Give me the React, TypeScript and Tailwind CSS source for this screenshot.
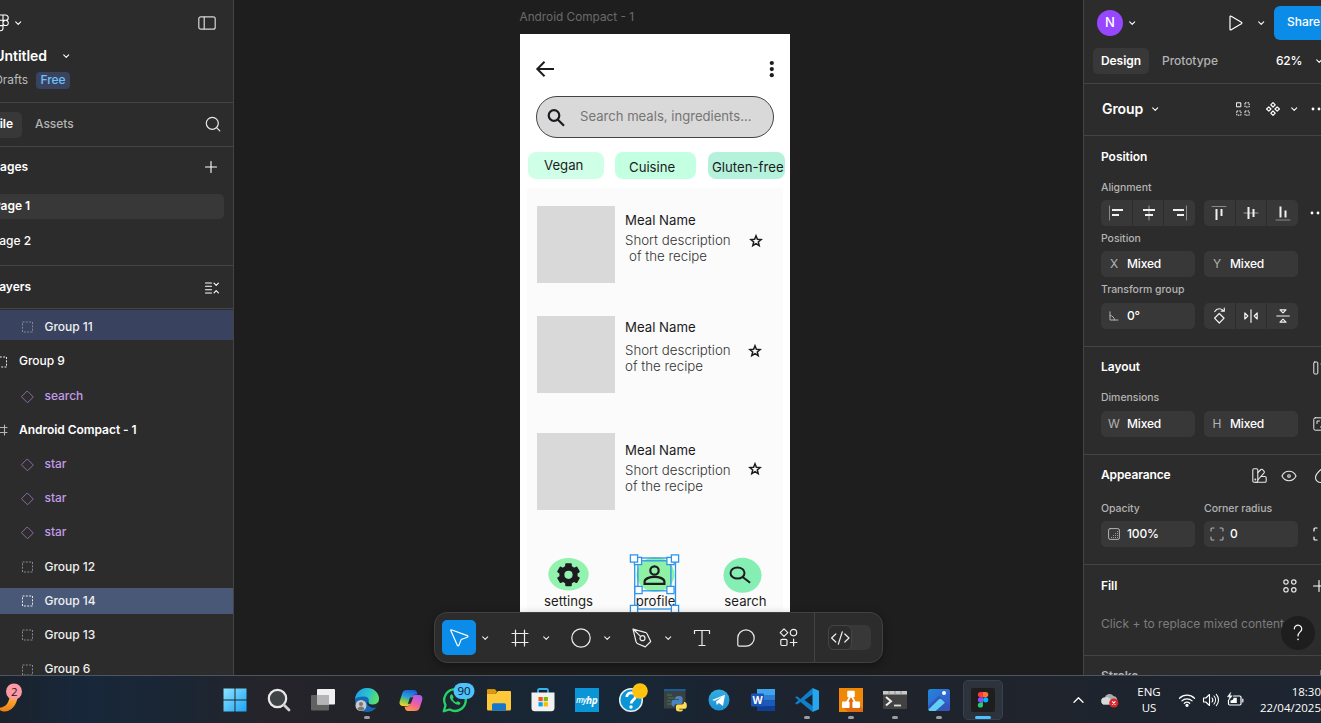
import React from "react";

type IconProps = {
  w: number;
  h: number;
  className?: string;
  sw?: number;
  children: React.ReactNode;
};

function Icon({ w, h, className = "", sw = 1, children }: IconProps) {
  return (
    <svg
      width={w}
      height={h}
      viewBox={`0 0 ${w} ${h}`}
      fill="none"
      stroke="currentColor"
      strokeWidth={sw}
      strokeLinecap="round"
      strokeLinejoin="round"
      className={`shrink-0 ${className}`}
    >
      {children}
    </svg>
  );
}

function Chevron({ className = "" }: { className?: string }) {
  return (
    <Icon w={8} h={6} sw={1.1} className={className}>
      <path d="M1.7 1.8 4.200 4.300 6.700 1.800" />
    </Icon>
  );
}

/* ---------- Left panel ---------- */

type Layer = { name: string; kind: "group" | "component" | "frame"; root?: boolean; state?: "hover" | "selected"; dim?: boolean };

const layers: Layer[] = [
  { name: "Group 11", kind: "group", state: "hover", dim: true },
  { name: "Group 9", kind: "group", root: true },
  { name: "search", kind: "component" },
  { name: "Android Compact - 1", kind: "frame", root: true },
  { name: "star", kind: "component" },
  { name: "star", kind: "component" },
  { name: "star", kind: "component" },
  { name: "Group 12", kind: "group", dim: true },
  { name: "Group 14", kind: "group", state: "selected" },
  { name: "Group 13", kind: "group", dim: true },
  { name: "Group 6", kind: "group", dim: true },
];

function LayerIcon({ layer }: { layer: Layer }) {
  if (layer.kind === "component")
    return (
      <Icon w={14} h={14} className="mt-[2px] text-[#8a6ca8]">
        <path d="M7.500 1.200 13.300 7 7.500 12.800 1.700 7z" />
      </Icon>
    );
  if (layer.kind === "frame")
    return (
      <Icon w={14} h={14} className="text-[#b5b5b5]" sw={1.1}>
        <path d="M4.500 2v10M10.500 2v10M2 4.500h11M2 9.500h11" />
      </Icon>
    );
  return (
    <Icon w={14} h={14} className={`mt-[1px] ${layer.dim ? "text-[#858891]" : "text-[#e8e8e8]"}`}>
      <rect x="2.500" y="2" width="10" height="10" strokeDasharray="2 1.33" strokeLinecap="butt" />
    </Icon>
  );
}

function LayerRow({ layer }: { layer: Layer }) {
  const bg =
    layer.state === "selected"
      ? "h-[26px] bg-[#4a5878]"
      : layer.state === "hover"
        ? "-mt-[4px] h-[30px] bg-[#394360] pt-[3px]"
        : "h-[26px]";
  const color = layer.kind === "component" ? "text-[#c29be8]" : layer.root ? "text-white" : "text-[#f0f0f0]";
  return (
    <div className="flex h-[34.2px] shrink-0 items-center">
      <div className={`flex w-full items-center ${bg}`}>
        <div className={layer.root ? "-ml-[6px] flex w-[25px]" : "ml-[20px] flex w-[24.500px]"}>
          <LayerIcon layer={layer} />
        </div>
        <span className={`whitespace-nowrap ${color} ${layer.kind === "frame" ? "font-semibold" : "font-medium"}`}>{layer.name}</span>
      </div>
    </div>
  );
}

function Clipped({ className, children }: { className: string; children: React.ReactNode }) {
  return <div className={`flex shrink-0 justify-end overflow-hidden whitespace-nowrap ${className}`}>{children}</div>;
}

function LeftPanel() {
  return (
    <aside className="flex h-full w-[234px] shrink-0 flex-col overflow-hidden border-r border-[#444444] bg-[#2c2c2c] text-[12px] font-medium tracking-[-0.040px] text-white">
      <div className="h-[103px] shrink-0 border-b border-[#444444]">
        <div className="flex h-[45px] items-center">
          <Icon w={12} h={18} className="-ml-[3px]" sw={1.1}>
            <path d="M6 1H3.5a2.6 2.6 0 0 0 0 5.3H6zM6 1h2.6a2.6 2.6 0 0 1 0 5.3H6zM6 6.300H3.500a2.600 2.600 0 0 0 0 5.300H6zM6 8.900a2.600 2.600 0 1 0 5.300 0 2.600 2.600 0 1 0-5.300 0M6 11.600H3.500A2.600 2.600 0 1 0 6 14.300z" />
          </Icon>
          <Chevron className="ml-[5px]" />
          <Icon w={18} h={14} className="ml-[176px] text-[#d8d8d8]" sw={1.2}>
            <rect x="0.800" y="0.800" width="16.400" height="12.400" rx="2" />
            <path d="M6.200 1v12" />
          </Icon>
        </div>
        <div className="flex h-[22px] items-center">
          <Clipped className="mb-[1px] w-[47px] text-[14px] font-semibold">Untitled</Clipped>
          <Chevron className="ml-[15px]" />
        </div>
        <div className="flex h-[26px] items-center">
          <Clipped className="w-[28px] font-normal text-[#b9b9b9]">Drafts</Clipped>
          <span className="ml-[8px] flex h-[17px] w-[34px] items-center justify-center rounded-[4px] bg-[#394360] text-[#6fc0fb]">Free</span>
        </div>
      </div>

      <div className="flex h-[44px] shrink-0 items-center border-b border-[#444444]">
        <Clipped className="h-[26px] w-[22px] items-center rounded-r-[5px] bg-[#383838] pr-[9px] pb-[1px] font-semibold">File</Clipped>
        <span className="mb-[1px] ml-[13px] w-[38px] text-[#b3b3b3]">Assets</span>
        <Icon w={16} h={16} className="mb-[1px] ml-[131.500px] text-[#e8e8e8]" sw={1.2}>
          <circle cx="7.300" cy="7.300" r="6" />
          <path d="m11.800 11.800 3 3" />
        </Icon>
      </div>

      <div className="h-[119px] shrink-0 border-b border-[#444444]">
        <div className="flex h-[40px] items-center">
          <Clipped className="w-[28px] font-semibold">Pages</Clipped>
          <Icon w={12} h={12} className="ml-[177px]" sw={1.1}>
            <path d="M6 .5v11M.5 6h11" />
          </Icon>
        </div>
        <div className="mt-[7px] flex h-[25px] w-[224px] items-center rounded-r-[5px] bg-[#383838] pb-[2px]">
          <Clipped className="w-[30px] font-semibold">Page 1</Clipped>
        </div>
        <div className="mt-[9px] flex h-[25px] items-center">
          <Clipped className="w-[31px]">Page 2</Clipped>
        </div>
      </div>

      <div className="flex h-[43px] shrink-0 items-center border-b border-[#444444]">
        <Clipped className="w-[31px] font-semibold">Layers</Clipped>
        <Icon w={14} h={12} className="mt-[2px] ml-[174px]" sw={1.1}>
          <path d="M.5 1h6M.5 4.300h6M.5 7.700h6M.5 11h6" />
          <path d="m9 1.200 2.200 2.200 2.200-2.200M9 10.800l2.200-2.200 2.200 2.200" />
        </Icon>
      </div>
      <div className="mt-[1.200px] flex flex-col">
        {layers.map((l, i) => (
          <LayerRow key={i} layer={l} />
        ))}
      </div>
    </aside>
  );
}

/* ---------- Canvas ---------- */

const meals = [
  { gap: "mt-[18px]", name: "pt-[6px]", desc: "mt-[4px]", star: "mt-[28px] ml-[17.500px]", indent: true },
  { gap: "mt-[33px]", name: "pt-[3.500px]", desc: "mt-[6.500px]", star: "mt-[28px] ml-[17px]", indent: false },
  { gap: "mt-[40px]", name: "pt-[9px]", desc: "mt-[4px]", star: "mt-[29.500px] ml-[16.500px]", indent: false },
];

function Meal({ gap, name, desc, star, indent }: (typeof meals)[number]) {
  return (
    <div className={`ml-[10px] flex h-[77px] ${gap}`}>
      <div className="w-[78px] shrink-0 bg-[#d9d9d9]" />
      <div className={`ml-[10.500px] w-[106px] shrink-0 whitespace-nowrap text-[13.200px] leading-[16px] ${name}`}>
        <div className="text-[#1a1a1a]">Meal Name</div>
        <div className={`text-[13.300px] font-light text-[#333333] ${desc}`}>
          Short description
          <br />
          <span className={indent ? "ml-[4px]" : ""}>of the recipe</span>
        </div>
      </div>
      <Icon w={14} h={14} className={`text-[#1d1b20] ${star}`} sw={1.500}>
        <path strokeLinejoin="miter" d="m7 1.800 1.400 3.500 3.700.3-2.800 2.400.9 3.700L7 9.700l-3.200 2 .9-3.700-2.800-2.400 3.700-.3z" />
      </Icon>
    </div>
  );
}

function Phone() {
  return (
    <div className="flex h-[600px] w-[270.500px] flex-col overflow-hidden bg-white text-[#1d1b20]">
      <div className="flex h-[62px] shrink-0 items-end justify-between pr-[13px] pl-[15px]">
        <Icon w={20} h={18} sw={2} className="mb-[18px]">
          <path strokeLinecap="butt" strokeLinejoin="miter" d="M19 9H3M9.500 1.800 2.300 9l7.200 7.200" />
        </Icon>
        <Icon w={10} h={18} className="mb-[18px]">
          <g fill="currentColor" stroke="none">
            <circle cx="4.800" cy="3" r="2.100" />
            <circle cx="4.800" cy="9.100" r="2.100" />
            <circle cx="4.800" cy="15.200" r="2.100" />
          </g>
        </Icon>
      </div>
      <div className="ml-[16.500px] flex h-[42.500px] w-[237.500px] shrink-0 items-center rounded-full border border-[#444444] bg-[#d9d9d9]">
        <Icon w={20} h={20} sw={2.200} className="mt-[3px] ml-[9px]">
          <circle cx="8" cy="7.500" r="5.300" />
          <path strokeLinecap="butt" d="m11.700 11.500 6.300 6.300" />
        </Icon>
        <span className="mt-[1px] ml-[14px] text-[13.100px] whitespace-nowrap text-[#757575]">Search meals, ingredients...</span>
      </div>
      <div className="mt-[13.500px] ml-[8px] flex h-[27px] shrink-0 text-[13.200px] leading-[27px] whitespace-nowrap">
        <div className="w-[76px] rounded-[8px] bg-[#cfffe7] pt-[0.500px] pl-[16.500px]">Vegan</div>
        <div className="ml-[11px] w-[81px] rounded-[8px] bg-[#c3ffe1] pt-[2px] pl-[14.500px]">Cuisine</div>
        <div className="ml-[12px] w-[77px] rounded-[8px] bg-[#b5f2dc] pt-[2px] pl-[4.500px]">Gluten-free</div>
      </div>
      <div className="mt-[9px] ml-[7px] flex w-[256.500px] flex-1 flex-col bg-[#fbfbfb]">
        {meals.map((m, i) => (
          <Meal key={i} {...m} />
        ))}
        <div className="mt-[47px] flex text-[13.200px]">
          <div className="ml-[11px] flex w-[62px] flex-col items-center">
            <Icon w={42} h={36}>
              <ellipse cx="20.500" cy="17.300" rx="20.200" ry="16.300" fill="#92f3ae" stroke="none" />
              <g stroke="none" fill="#1d1b20">
                <circle cx="20.500" cy="17.800" r="9.200" />
                <rect x="17.200" y="6.300" width="6.600" height="23" rx="1" />
                <rect x="17.200" y="6.300" width="6.600" height="23" rx="1" transform="rotate(60 20.500 17.800)" />
                <rect x="17.200" y="6.300" width="6.600" height="23" rx="1" transform="rotate(120 20.500 17.800)" />
              </g>
              <circle cx="20.500" cy="17.800" r="4.100" fill="#92f3ae" stroke="none" />
            </Icon>
            <span className="leading-[16px]">settings</span>
          </div>
          <div className="ml-[24px] flex w-[64px] flex-col items-center">
            <Icon w={42} h={36}>
              <ellipse cx="20.500" cy="17.500" rx="19" ry="17.200" fill="#8ef1a3" stroke="none" />
              <g stroke="#1d1b20" strokeWidth="2.200">
                <circle cx="19.500" cy="13.500" r="4.200" />
                <path strokeLinejoin="miter" d="M9.600 26.800v-2.200c0-3 5-4.700 9.900-4.700s9.900 1.700 9.900 4.700v2.200z" />
              </g>
            </Icon>
            <span className="leading-[16px]">profile</span>
          </div>
          <div className="ml-[28px] flex w-[60px] flex-col items-center">
            <Icon w={42} h={36} className="-ml-[6px]">
              <ellipse cx="20.500" cy="18.300" rx="19" ry="17.500" fill="#84eeb3" stroke="none" />
              <g stroke="#1d1b20" strokeWidth="2">
                <ellipse cx="15.500" cy="16" rx="7" ry="5.600" />
                <path strokeLinecap="butt" d="m20.300 19.800 7.800 6" />
              </g>
            </Icon>
            <span className="leading-[16px]">search</span>
          </div>
        </div>
      </div>
    </div>
  );
}

function Selection() {
  const handles = [
    [4, 7], [36.500, 7], [4.500, 36], [36.500, 36],
    [0, 4.500], [41, 4.500], [0, 55], [41, 55],
  ];
  return (
    <svg width="54" height="64" viewBox="-6 -2 54 64" fill="none" className="absolute top-[552px] left-[394px]">
      <g stroke="#2b95ee" strokeWidth="1.300">
        <rect x="0.700" y="4" width="40.800" height="51" />
        <rect x="3.900" y="6.800" width="33" height="30" />
        <g fill="#ffffff">
          {handles.map(([x, y], i) => (
            <rect key={i} x={x - 3.6} y={y - 3.6} width="7.200" height="7.200" />
          ))}
        </g>
      </g>
    </svg>
  );
}

function Tool({ className = "", children }: { className?: string; children: React.ReactNode }) {
  return <div className={`flex w-[34px] shrink-0 items-center justify-center ${className}`}>{children}</div>;
}

function ToolChevron() {
  return (
    <div className="flex w-[18px] shrink-0 justify-center">
      <Chevron />
    </div>
  );
}

function Toolbar() {
  return (
    <div className="absolute top-[612px] left-[200px] flex h-[51px] w-[449px] items-center rounded-[13px] border border-[#414141] bg-[#2c2c2c] pl-[7px] text-[#ededed] shadow-[0_3px_8px_rgba(0,0,0,0.35)]">
      <Tool className="h-[35px] rounded-[5px] bg-[#0c8ce9] text-white">
        <Icon w={20} h={20} sw={1.200}>
          <path d="m2.300 1.800 16 5.800c.8.300.8 1.300 0 1.600l-5.500 2c-.4.200-.7.500-.9.900l-2 5.200c-.3.800-1.300.8-1.600 0L1.800 2.600c-.2-.6 0-1 .5-.8z" />
        </Icon>
      </Tool>
      <ToolChevron />
      <Tool className="ml-[9px]">
        <Icon w={18} h={18} sw={1.200}>
          <path d="M4.500 1v16M13.500 1v16M1 4.500h16M1 13.500h16" />
        </Icon>
      </Tool>
      <ToolChevron />
      <Tool className="ml-[9px]">
        <Icon w={20} h={20} sw={1.200}>
          <circle cx="10" cy="10" r="9.200" />
        </Icon>
      </Tool>
      <ToolChevron />
      <Tool className="ml-[9px]">
        <Icon w={20} h={20} sw={1.200}>
          <path d="M1 1.200 13 4.300c1 .3 1.800.9 2.200 1.800l3.500 7.400-5.400 5.400-7.500-3.200c-.9-.4-1.500-1.200-1.800-2.200z" />
          <circle cx="10.500" cy="10.200" r="2.500" />
          <path d="m1.500 1.500 7 6.900" />
        </Icon>
      </Tool>
      <ToolChevron />
      <Tool className="ml-[8px]">
        <Icon w={18} h={18} sw={1.200}>
          <path d="M1.500 4.500V1.500h15v3M9 1.500v15M6 16.500h6" />
        </Icon>
      </Tool>
      <Tool className="ml-[9.500px]">
        <Icon w={18} h={18} sw={1.200}>
          <path d="M9 .8a8.200 8.200 0 1 1 0 16.400H2.300c-.8 0-1.500-.6-1.500-1.500V9A8.200 8.200 0 0 1 9 .8z" />
        </Icon>
      </Tool>
      <Tool className="ml-[8.500px]">
        <Icon w={19} h={19} sw={1.200}>
          <path d="M5 .8 8.800 4.600 5 8.400 1.200 4.600z" />
          <circle cx="14.500" cy="4.600" r="3.200" />
          <rect x="1.800" y="11.300" width="6.200" height="6.200" rx="1.200" />
          <path d="M14.600 11.200v6.600M11.300 14.500h6.600" />
        </Icon>
      </Tool>
      <div className="ml-[9px] h-full w-px bg-[#444444]" />
      <div className="ml-[13px] flex h-[25px] w-[43px] rounded-[6px] bg-[#383838]">
        <div className="flex w-[24px] items-center justify-center rounded-[6px] border border-[#444444] bg-[#2c2c2c]">
          <Icon w={20} h={16} sw={1.200}>
            <path d="M5.800 4 1.600 8l4.200 4M14.800 4l4.200 4-4.200 4M12.300 1.800l-4 12.400" />
          </Icon>
        </div>
      </div>
    </div>
  );
}

function Canvas() {
  return (
    <main className="relative h-full flex-1 overflow-hidden bg-[#1e1e1e]">
      <div className="ml-[285.500px] flex h-[33.500px] items-start pt-[9px] text-[11.800px] leading-[17px] text-[#6b6b6b]">Android Compact - 1</div>
      <div className="ml-[285.500px]">
        <Phone />
      </div>
      <Selection />
      <Toolbar />
    </main>
  );
}

/* ---------- Right panel ---------- */

function Field({ icon, value }: { icon: React.ReactNode; value: string }) {
  return (
    <div className="flex h-[26px] w-[94px] shrink-0 items-center rounded-[5px] bg-[#383838]">
      <span className="flex w-[26px] shrink-0 items-center justify-center font-normal text-[#b3b3b3]">{icon}</span>
      <span className="tracking-[-0.150px]">{value}</span>
    </div>
  );
}

function ButtonGroup({ items }: { items: React.ReactNode[] }) {
  return (
    <div className="flex h-[26px] w-[94px] shrink-0 gap-px overflow-hidden rounded-[5px]">
      {items.map((it, i) => (
        <div key={i} className="flex flex-1 items-center justify-center bg-[#383838]">
          {it}
        </div>
      ))}
    </div>
  );
}

function Label({ children }: { children: React.ReactNode }) {
  return <span className="w-[103px] shrink-0 text-[10.500px] tracking-[-0.050px] text-[#b3b3b3]">{children}</span>;
}

const alignH = [
  <Icon key="l" w={16} h={16} sw={2} className="text-[#f0f0f0]">
    <path stroke="#8a8a8a" strokeWidth="1" d="M1.500 1v14" />
    <path strokeLinecap="butt" d="M4 5h11M4 10h7" />
  </Icon>,
  <Icon key="c" w={16} h={16} sw={2} className="ml-[1px] text-[#f0f0f0]">
    <path stroke="#a0a0a0" strokeWidth="1" d="M8 1v14" />
    <path strokeLinecap="butt" d="M2 5h12M4 10h8" />
  </Icon>,
  <Icon key="r" w={16} h={16} sw={2} className="ml-[1px] text-[#f0f0f0]">
    <path stroke="#8a8a8a" strokeWidth="1" d="M14.500 1v14" />
    <path strokeLinecap="butt" d="M1 5h11M5 10h7" />
  </Icon>,
];

const alignV = [
  <Icon key="t" w={16} h={16} sw={2} className="text-[#f0f0f0]">
    <path stroke="#8a8a8a" strokeWidth="1" d="M1 1.500h14" />
    <path strokeLinecap="butt" d="M5.500 4v11M10.500 4v7" />
  </Icon>,
  <Icon key="m" w={16} h={16} sw={2} className="text-[#f0f0f0]">
    <path stroke="#a0a0a0" strokeWidth="1" d="M1 8h14" />
    <path strokeLinecap="butt" d="M5.500 2v12M10.500 4v8" />
  </Icon>,
  <Icon key="b" w={16} h={16} sw={2} className="text-[#f0f0f0]">
    <path stroke="#8a8a8a" strokeWidth="1" d="M1 15h14" />
    <path strokeLinecap="butt" d="M5.500 1.500v11M10.500 5.500v7" />
  </Icon>,
];

const transforms = [
  <Icon key="r" w={16} h={18} sw={1.200} className="text-[#f0f0f0]">
    <path d="M8.300 6.500 13.100 11.200 8.300 16 3.500 11.200z" />
    <path d="M3.800 4.500C5.800 1 10.300.8 12.800 4M13.300 1.200v3h-3" />
  </Icon>,
  <Icon key="h" w={16} h={16} sw={1.200} className="text-[#f0f0f0]">
    <path d="M8 1.800v12.500M1.800 5v6l3-3zM14.200 5v6l-3-3z" />
  </Icon>,
  <Icon key="v" w={16} h={16} sw={1.200} className="text-[#f0f0f0]">
    <path d="M1.800 8h12.500M5 1.800h6l-3 3zM5 14.200h6l-3-3z" />
  </Icon>,
];

function Dots({ className = "" }: { className?: string }) {
  return (
    <Icon w={16} h={6} className={className}>
      <g fill="currentColor" stroke="none">
        <circle cx="2" cy="3" r="1.400" />
        <circle cx="8" cy="3" r="1.400" />
        <circle cx="14" cy="3" r="1.400" />
      </g>
    </Icon>
  );
}

function RightPanel() {
  return (
    <aside className="relative flex h-full w-[238px] shrink-0 flex-col overflow-hidden border-l border-[#444444] bg-[#2c2c2c] text-[12px] font-medium tracking-[-0.040px] text-white">
      <div className="h-[84px] w-[260px] shrink-0 border-b border-[#444444]">
        <div className="flex h-[45px] items-center">
          <div className="ml-[13px] flex h-[26px] w-[26px] items-center justify-center rounded-full bg-[#9747ff] text-[13px]">N</div>
          <Chevron className="ml-[5px]" />
          <Icon w={14} h={16} className="ml-[93px]" sw={1.200}>
            <path d="M1 1.800v12.400c0 .6.600 1 1.200.6l10.200-6c.6-.4.6-1.200 0-1.600L2.200 1.200C1.600.8 1 1.200 1 1.800z" />
          </Icon>
          <Chevron className="ml-[14px]" />
          <div className="ml-[9px] flex h-[34px] w-[60px] shrink-0 items-center rounded-[6px] bg-[#0c8ce9] pb-[1px] pl-[13px]">Share</div>
        </div>
        <div className="mt-[3px] flex h-[26px] items-center">
          <div className="ml-[9px] flex h-full w-[56px] items-center justify-center rounded-[5px] bg-[#383838] font-semibold">Design</div>
          <span className="ml-[13px] w-[114px] text-[#b3b3b3]">Prototype</span>
          <span className="w-[39px] tracking-[-0.200px]">62%</span>
          <Chevron />
        </div>
      </div>

      <div className="flex h-[52px] w-[260px] shrink-0 items-center border-b border-[#444444] pb-[2px]">
        <span className="mb-[1px] ml-[18px] w-[49px] text-[14px] font-semibold tracking-[-0.100px]">Group</span>
        <Chevron />
        <Icon w={14} h={14} className="ml-[77px]">
          <rect x="0.800" y="0.800" width="4" height="4" />
          <g strokeDasharray="1.500 1" strokeLinecap="butt">
            <rect x="9" y="0.800" width="4.200" height="4.200" />
            <rect x="0.800" y="9" width="4.200" height="4.200" />
            <rect x="9" y="9" width="4.200" height="4.200" />
          </g>
        </Icon>
        <Icon w={14} h={14} className="ml-[16px]" sw={1.200}>
          <path d="M7 .6 9.200 2.800 7 5 4.800 2.800zM7 9l2.200 2.200L7 13.400l-2.200-2.200zM2.800 4.800 5 7 2.800 9.200.6 7zM11.200 4.800 13.400 7l-2.200 2.200L9 7z" />
        </Icon>
        <Chevron className="ml-[9.500px]" />
        <Dots className="ml-[13.500px]" />
      </div>

      <div className="h-[211px] w-[260px] shrink-0 border-b border-[#444444] pl-[17px]">
        <div className="flex h-[42px] items-center font-semibold">Position</div>
        <div className="flex h-[20px] items-center">
          <Label>Alignment</Label>
        </div>
        <div className="mt-[2px] flex items-center gap-[9px]">
          <ButtonGroup items={alignH} />
          <ButtonGroup items={alignV} />
          <Dots className="ml-[3px]" />
        </div>
        <div className="flex h-[25px] items-center">
          <Label>Position</Label>
        </div>
        <div className="flex gap-[9px]">
          <Field icon="X" value="Mixed" />
          <Field icon="Y" value="Mixed" />
        </div>
        <div className="flex h-[26px] items-center">
          <Label>Transform group</Label>
        </div>
        <div className="flex gap-[9px]">
          <Field
            icon={
              <Icon w={10} h={10} sw={1}>
                <path d="M1 .8V9h8M1 4.500A4.500 4.500 0 0 1 5.500 9" />
              </Icon>
            }
            value="0°"
          />
          <ButtonGroup items={transforms} />
        </div>
      </div>

      <div className="h-[108px] w-[260px] shrink-0 border-b border-[#444444] pl-[17px]">
        <div className="flex h-[40px] items-center">
          <span className="w-[212px] font-semibold">Layout</span>
          <Icon w={14} h={14} className="mt-[1px] text-[#e8e8e8]">
            <rect x="0.800" y="1" width="4" height="12" rx="1" />
            <path d="M8 3h5" />
          </Icon>
        </div>
        <div className="flex h-[22px] items-center">
          <Label>Dimensions</Label>
        </div>
        <div className="mt-[2px] flex items-center gap-[9px]">
          <Field icon="W" value="Mixed" />
          <Field icon="H" value="Mixed" />
          <Icon w={14} h={14} className="ml-[6px] text-[#e8e8e8]">
            <rect x="0.800" y="0.800" width="12.400" height="12.400" rx="1.500" />
            <path d="M4 6.500V4h2.500M10 7.500V10H7.500" />
          </Icon>
        </div>
      </div>

      <div className="h-[110px] w-[260px] shrink-0 border-b border-[#444444] pl-[17px]">
        <div className="flex h-[41px] items-center">
          <span className="mb-[1px] w-[151px] font-semibold tracking-[-0.120px]">Appearance</span>
          <Icon w={15} h={15} sw={1.100} className="text-[#e8e8e8]">
            <rect x="0.800" y="0.800" width="5" height="13.400" rx="1.200" />
            <path d="M5.800 4.500 9 1.500c.5-.4 1-.4 1.500 0l1.600 1.800c.4.500.4 1 0 1.500L5.800 12M9.500 8.500h3.300c.8 0 1.400.6 1.400 1.400v3c0 .7-.6 1.300-1.400 1.300H3.500" />
            <circle cx="3.300" cy="11.500" r=".4" />
          </Icon>
          <Icon w={16} h={14} sw={1.100} className="ml-[14px] text-[#e8e8e8]">
            <path d="M1 7c1.300-2.900 4-4.700 7-4.700S13.700 4.100 15 7c-1.300 2.900-4 4.700-7 4.700S2.300 9.900 1 7z" />
            <circle cx="8" cy="7" r="1.300" />
          </Icon>
          <Icon w={14} h={16} sw={1.100} className="ml-[16.500px] text-[#e8e8e8]">
            <path d="M7 1.500C3.500 4.500 1.500 7.200 1.500 9.800a5.500 4.700 0 0 0 11 0C12.500 7.200 10.500 4.500 7 1.500z" />
          </Icon>
        </div>
        <div className="flex h-[25px] items-center">
          <Label>Opacity</Label>
          <Label>Corner radius</Label>
        </div>
        <div className="flex items-center gap-[9px]">
          <Field
            icon={
              <Icon w={12} h={12}>
                <rect x="0.600" y="0.600" width="10.800" height="10.800" rx="1.500" />
                <path strokeDasharray="0.800 1.200" strokeLinecap="butt" d="M3 9.500h7M5 7.500h5M7 5.500h3M9 3.500h1" />
              </Icon>
            }
            value="100%"
          />
          <Field
            icon={
              <Icon w={14} h={14} sw={1.100}>
                <path d="M1 4V2c0-.6.400-1 1-1h2M10 1h2c.6 0 1 .4 1 1v2M13 10v2c0 .6-.4 1-1 1h-2M4 13H2c-.6 0-1-.4-1-1v-2" />
              </Icon>
            }
            value="0"
          />
          <Icon w={14} h={14} sw={1.200} className="ml-[6px]">
            <path d="M1 4V2c0-.6.400-1 1-1h2M4 13H2c-.6 0-1-.4-1-1v-2" />
          </Icon>
        </div>
      </div>

      <div className="h-[91px] w-[260px] shrink-0 border-b border-[#444444] pl-[17px]">
        <div className="flex h-[42px] items-center">
          <span className="w-[182px] font-semibold">Fill</span>
          <Icon w={14} h={14} sw={1.200} className="text-[#e8e8e8]">
            <circle cx="3" cy="3" r="2.200" />
            <circle cx="10.800" cy="3" r="2.200" />
            <circle cx="3" cy="10.800" r="2.200" />
            <circle cx="10.800" cy="10.800" r="2.200" />
          </Icon>
          <Icon w={12} h={12} className="ml-[16px]" sw={1.100}>
            <path d="M6 .5v11M.5 6h11" />
          </Icon>
        </div>
        <div className="flex h-[34px] items-center font-normal tracking-normal whitespace-nowrap text-[#7d7d7d]">Click + to replace mixed content</div>
      </div>
      <div className="flex h-[40px] w-[260px] shrink-0 items-center pl-[17px] font-semibold text-[#b3b3b3]">
        <span className="w-[214px]">Stroke</span>
        <Icon w={12} h={12} sw={1.100}>
          <path d="M6 .5v11M.5 6h11" />
        </Icon>
      </div>
      <div className="absolute top-[616px] left-[197px] flex h-[34px] w-[34px] items-center justify-center rounded-full bg-[#1e1e1e]">
        <Icon w={10} h={18} sw={1.200}>
          <path d="M1.300 4.800a3.700 3.700 0 1 1 6.100 2.800C6 8.900 5 9.600 5 12" />
          <circle cx="5" cy="15.300" r=".3" />
        </Icon>
      </div>
    </aside>
  );
}

/* ---------- Taskbar ---------- */

function TaskButton({ children, running, active }: { children: React.ReactNode; running?: boolean; active?: boolean }) {
  return (
    <div className="relative flex h-[47px] w-[44px] shrink-0 items-center justify-center">
      <div className={`flex h-[40px] w-[40px] items-center justify-center rounded-[5px] ${active ? "border border-[#3a4049] bg-[#2d333c]" : ""}`}>{children}</div>
      {running && <span className="absolute bottom-[4px] left-[19px] h-[3px] w-[6px] rounded-full bg-[#9a9ea4]" />}
      {active && <span className="absolute bottom-[4px] left-[14px] h-[3px] w-[16px] rounded-full bg-[#4cc2ff]" />}
    </div>
  );
}

function Art({ children }: { children: React.ReactNode }) {
  return (
    <svg width="26" height="26" viewBox="0 0 26 26" fill="none" className="shrink-0 overflow-visible">
      {children}
    </svg>
  );
}

function Taskbar() {
  return (
    <footer className="relative flex h-[48px] shrink-0 border-t border-[#4c5560] bg-[linear-gradient(90deg,#1b222c_0%,#17273a_6%,#1b2633_14%,#25242a_20%,#202329_30%,#162738_43%,#1b2430_55%,#1f232b_70%,#1d2530_100%)] font-['Open_Sans',sans-serif] text-white">
      <div className="w-[212.600px] shrink-0">
        <svg width="30" height="46" viewBox="0 0 30 46" fill="none">
          <defs>
            <linearGradient id="moon" x1="0" y1="0" x2="0" y2="1">
              <stop offset="0" stopColor="#ffc24a" />
              <stop offset="1" stopColor="#ef7d12" />
            </linearGradient>
          </defs>
          <path d="M18 17C18 27 13 35 5 35.500 2 35.500 0 34.500-3 32 6 32 9 27 10 19z" fill="url(#moon)" />
          <circle cx="14" cy="15.500" r="8" fill="#ff99a4" />
          <text x="14.300" y="19.500" fontSize="11.500" textAnchor="middle" fill="#1b1b1b">2</text>
        </svg>
      </div>
      <TaskButton>
        <Art>
          <defs>
            <linearGradient id="win" x1="0" y1="0" x2="1" y2="1">
              <stop offset="0" stopColor="#8fe3ff" />
              <stop offset="1" stopColor="#1ca4f5" />
            </linearGradient>
          </defs>
          <path d="M1.500 1.500h11v11h-11zM13.500 1.500h11v11h-11zM1.500 13.500h11v11h-11zM13.500 13.500h11v11h-11z" fill="url(#win)" />
        </Art>
      </TaskButton>
      <TaskButton>
        <Art>
          <circle cx="11.500" cy="11.500" r="8.700" fill="#3f4348" stroke="#e8e8e8" strokeWidth="2.200" />
          <path d="m18 18 5 5" stroke="#d2d2d2" strokeWidth="2.800" strokeLinecap="round" />
        </Art>
      </TaskButton>
      <TaskButton>
        <Art>
          <rect x="1" y="8" width="18" height="15.500" rx="1" fill="#616161" />
          <rect x="7" y="2" width="18" height="15.500" rx="1" fill="#f0f0f0" />
          <path d="M7 8h12v9.500H7z" fill="#b4b4b4" />
        </Art>
      </TaskButton>
      <TaskButton running>
        <Art>
          <defs>
            <linearGradient id="edgeTop" x1="0" y1="0.300" x2="1" y2="0.600">
              <stop offset="0" stopColor="#1f9de4" />
              <stop offset="0.550" stopColor="#2cc5c9" />
              <stop offset="1" stopColor="#63e05a" />
            </linearGradient>
          </defs>
          <circle cx="13" cy="13" r="12" fill="#1267b8" />
          <path d="M1 12C2 5 7 1 13 1c7 0 12 5 12 10.500 0 4-3 6-6.500 6-3 0-4.500-1-4-2.500 1-1.500.5-5.500-4.500-5.500-4.500 0-8 1-9 2.500z" fill="url(#edgeTop)" />
          <path d="M14.500 15c-.5 1.500 1 2.800 4 2.800 2.500 0 5-1 6.500-3.300l1 3-3 3c-5 1-10-1-10-5z" fill="#23262c" />
          <circle cx="7" cy="18.500" r="5.500" fill="#c9c9c9" />
          <circle cx="7" cy="17" r="2" fill="#777" />
          <path d="M3.500 22c.5-3.500 6.500-3.500 7 0-2 2.200-5 2.200-7 0z" fill="#777" />
        </Art>
      </TaskButton>
      <TaskButton>
        <Art>
          <defs>
            <linearGradient id="copA" x1="0.600" y1="0" x2="0.300" y2="1">
              <stop offset="0" stopColor="#1b62d8" />
              <stop offset="0.450" stopColor="#2aa0d8" />
              <stop offset="0.700" stopColor="#7bc850" />
              <stop offset="1" stopColor="#f7cf2f" />
            </linearGradient>
            <linearGradient id="copB" x1="0.700" y1="0" x2="0.200" y2="1">
              <stop offset="0" stopColor="#a95bf0" />
              <stop offset="0.500" stopColor="#f0609f" />
              <stop offset="1" stopColor="#ff9a3c" />
            </linearGradient>
          </defs>
          <path d="M9 3h7c1.500 0 2.300.8 2.800 2l.7 2.500h-2c-2 0-3 1-3.600 3L12 17c-.5 1.500-1.500 2-3 2H5c-3 0-4-2.500-3.200-5l2.400-7.500C5 4 6.500 3 9 3z" fill="url(#copA)" />
          <path d="M17 24h-7c-1.500 0-2.300-.8-2.800-2l-.7-2.500h2c2 0 3-1 3.600-3L14 10c.5-1.500 1.500-2 3-2h4c3 0 4 2.500 3.200 5l-2.400 7.500C21 23 19.500 24 17 24z" fill="url(#copB)" />
          <path d="m12 10.500 3.300-.3-2.500 6.300-3 .5z" fill="#242830" />
        </Art>
      </TaskButton>
      <TaskButton>
        <Art>
          <path d="m1.800 24.200 1.700-6A10.800 10.800 0 1 1 7.700 22.500z" fill="#1e2731" stroke="#25d366" strokeWidth="2.300" strokeLinejoin="round" />
          <path d="M9 7.500c-2 1.500-1.200 4.500 1.600 7.300s6 4 7.500 2.200c.8-1 .4-1.500-2.400-2.800-1 .2-1.300 1.300-2 1.100-1.500-.8-2.500-1.900-3-3.200 0-.6 1-1 .8-1.800C10.500 7.500 10 7 9 7.500z" fill="#25d366" />
          <rect x="11.500" y="-4" width="21" height="16" rx="8" fill="#4cc2ff" />
          <text x="22" y="8.200" fontSize="11.500" textAnchor="middle" fill="#111">90</text>
        </Art>
      </TaskButton>
      <TaskButton>
        <Art>
          <path d="M1 3.500C1 2.700 1.500 2 2.300 2h6.500L11 4.500H1z" fill="#c98a08" />
          <path d="M1 6.500h9l2-2.500h12c.7 0 1 .5 1 1.200V22c0 .8-.5 1.500-1.300 1.500H2.300C1.500 23.500 1 22.800 1 22z" fill="#fdc93b" />
          <path d="M1 2.800h8L11 5l-2 1.800H1z" fill="#dd9b0c" />
          <path d="M6 23.500V18c0-1 .7-1.700 1.700-1.700h10.600c1 0 1.700.7 1.700 1.700v5.500z" fill="#1477cb" />
        </Art>
      </TaskButton>
      <TaskButton>
        <Art>
          <path d="M8 6V3.500C8 2.500 8.500 2 9.500 2h7c1 0 1.500.5 1.500 1.500V6" stroke="#35b4ee" strokeWidth="1.800" />
          <path d="M1.500 5.500h23V21c0 2-1.200 3.300-3.200 3.300H4.700c-2 0-3.200-1.300-3.200-3.300z" fill="#f1f1f1" />
          <path d="M8.500 10h4.200v4.200H8.500z" fill="#f25022" />
          <path d="M13.700 10h4.200v4.200h-4.200z" fill="#7fba00" />
          <path d="M8.500 15.200h4.200v4.200H8.500z" fill="#00a4ef" />
          <path d="M13.700 15.200h4.200v4.200h-4.200z" fill="#ffb900" />
        </Art>
      </TaskButton>
      <TaskButton>
        <div className="flex h-[24px] w-[24px] items-center justify-center bg-[#0a96d6] text-[8px] leading-none font-semibold tracking-[-0.500px] italic">
          my<span className="text-[10px] font-bold">hp</span>
        </div>
      </TaskButton>
      <TaskButton>
        <Art>
          <circle cx="13" cy="13" r="11.300" fill="#0a96d6" stroke="#e8eef2" strokeWidth="1.500" />
          <path d="M8.800 10c0-2.600 1.900-4.200 4.400-4.200s4.200 1.400 4.200 3.700c0 3.500-4.100 3.300-4.200 7" stroke="#fff" strokeWidth="2.700" />
          <circle cx="13" cy="20" r="1.700" fill="#fff" />
          <circle cx="22" cy="4" r="7.800" fill="#ffc20e" />
        </Art>
      </TaskButton>
      <TaskButton>
        <Art>
          <rect x="2" y="2" width="21.500" height="19.500" fill="#3b4043" />
          <path d="M2 2h21.500v2H2z" fill="#1b5e93" />
          <path d="M5 8h5M6 11h6M5 14h4M5 17h5" stroke="#3f7a4e" />
          <path d="M17 9c3 0 3.500 1 3.500 2.500V15c0 1.500-1 2-2 2h-4c-1.500 0-2.200 1-2.200 2.500C9.500 19.500 9.300 17 9.500 15c.2-1.500 1-2.300 2.500-2.300h5V12h-4c0-2 .8-3 4-3z" fill="#4a84bd" />
          <path d="M17.500 24.500c-3 0-3.500-1-3.500-2.500v-2.500c0-1.500 1-2 2-2h4c1.500 0 2-1 2-2.500 2.800 0 3 2.500 2.800 4.500-.2 1.500-1 2.300-2.500 2.300h-5v.7H21c0 1.500-.8 2-3.500 2z" fill="#ffdc52" />
        </Art>
      </TaskButton>
      <TaskButton>
        <Art>
          <defs>
            <linearGradient id="tg" x1="0" y1="0" x2="0" y2="1">
              <stop offset="0" stopColor="#34aee3" />
              <stop offset="1" stopColor="#1c8fd0" />
            </linearGradient>
          </defs>
          <circle cx="13" cy="13" r="10.500" fill="url(#tg)" />
          <path d="m6 13 13-5.300-2 11.300-4.200-3-2 2-.8-3.500 6-4.500-7.500 3.800z" fill="#fff" />
        </Art>
      </TaskButton>
      <TaskButton>
        <Art>
          <path d="M7 2h18v6H7z" fill="#41a5ee" />
          <path d="M7 8h18v5.500H7z" fill="#2b7cd3" />
          <path d="M7 13.500h18V19H7z" fill="#185abd" />
          <path d="M7 19h18v5H7z" fill="#103f91" />
          <rect x="1" y="6.500" width="13" height="13" rx="1" fill="#1a55b8" />
          <text x="7.500" y="17" fontSize="10.500" fontWeight="700" textAnchor="middle" fill="#fff">W</text>
        </Art>
      </TaskButton>
      <TaskButton running>
        <Art>
          <path d="M18.500 1 6.500 12 3 9.200 1 10.300l3.500 3-3.500 3 2 1.200L6.500 15l12 10 .5-5.500L10.500 13 19 7z" fill="#0f7fc9" />
          <path d="M18.500 1 25 3.800v18.400L18.500 25z" fill="#27a5ee" />
        </Art>
      </TaskButton>
      <TaskButton running>
        <Art>
          <rect x="1" y="1" width="24" height="24" fill="#f08705" />
          <path d="m13 10 12 12v3H10L4 19z" fill="#df6c0c" />
          <path d="M13 8 7.500 18M13 8l5.500 10" stroke="#fff" strokeWidth="1.800" />
          <rect x="9.200" y="3.800" width="7.600" height="6.500" rx="1" fill="#fff" />
          <rect x="4" y="14.500" width="7.600" height="6.500" rx="1" fill="#fff" />
          <rect x="14.400" y="14.500" width="7.600" height="6.500" rx="1" fill="#fff" />
        </Art>
      </TaskButton>
      <TaskButton running>
        <Art>
          <rect x="1" y="4" width="24" height="18" rx="1" fill="#424242" />
          <path d="M1 4h24v3.500H1z" fill="#c8c8c8" />
          <path d="M7 4v3.500M13 4v3.500M19 4v3.500" stroke="#8a8a8a" />
          <path d="m4 10 5 4.300-5 4.300" stroke="#eee" strokeWidth="2" />
          <path d="M12 18.500h7" stroke="#ddd" strokeWidth="1.800" />
        </Art>
      </TaskButton>
      <TaskButton running>
        <Art>
          <defs>
            <linearGradient id="pho" x1="0" y1="0" x2="1" y2="1">
              <stop offset="0" stopColor="#2088dc" />
              <stop offset="1" stopColor="#3c50c8" />
            </linearGradient>
          </defs>
          <rect x="2" y="2" width="22" height="22" rx="2.500" fill="url(#pho)" />
          <path d="m2 19 9.500-9c1-.9 2-.9 3 0L24 19v2.500c0 1.500-1 2.500-2.500 2.500h-17C3 24 2 23 2 21.500z" fill="#3556b8" />
          <path d="m2.500 22.500 10.500-10.300c.8-.7 1.700-.7 2.500 0l3.500 3.600L9.500 24h-5c-1 0-2-.7-2-1.500z" fill="#5fd0f5" />
          <circle cx="18" cy="6" r="2" fill="#fff" />
        </Art>
      </TaskButton>
      <TaskButton active>
        <Art>
          <rect x="1" y="1" width="24" height="24" rx="2" fill="#1e1e1e" />
          <path d="M13 5h-2.500a2.600 2.600 0 0 0 0 5.200H13z" fill="#ff3737" />
          <path d="M13 5h2.700a2.600 2.600 0 0 1 0 5.200H13z" fill="#ff7237" />
          <path d="M13 10.200h-2.500a2.600 2.600 0 0 0 0 5.200H13z" fill="#874fff" />
          <circle cx="15.700" cy="12.800" r="2.600" fill="#00b6ff" />
          <path d="M13 15.400h-2.500A2.600 2.600 0 1 0 13 18z" fill="#24cb71" />
        </Art>
      </TaskButton>
      <div className="ml-[68.400px] flex h-[47px] flex-1 items-center overflow-hidden">
        <Icon w={11} h={8} sw={1.300}>
          <path d="M1 6.300 5.500 1.800 10 6.300" />
        </Icon>
        <svg width="18" height="16" viewBox="0 0 18 16" className="ml-[17px] shrink-0">
          <path d="M4 12.500a3.500 3.500 0 0 1-.3-7A5 5 0 0 1 12.500 4 4 4 0 0 1 15 11l-2 1.500z" fill="#a9adb1" />
          <path d="M4 12.500a3.500 3.500 0 0 1-.3-7 4 4 0 0 1 4.500.5l5 5-1 1.500z" fill="#d8d8d8" />
          <circle cx="12.800" cy="11" r="4.600" fill="#d9252c" />
          <path d="m11.200 9.400 3.200 3.200m0-3.200-3.200 3.200" stroke="#fff" strokeWidth="1.100" />
        </svg>
        <div className="ml-[13px] w-[34px] text-center text-[11.500px] leading-[16px]">
          ENG
          <br />
          US
        </div>
        <Icon w={18} h={16} sw={1.300} className="ml-[12px]">
          <path d="M1.500 6.300a10.600 10.600 0 0 1 15 0M3.900 8.900a7.200 7.200 0 0 1 10.200 0M6.300 11.300a3.800 3.800 0 0 1 5.400 0" />
          <circle cx="9" cy="13.300" r="1" fill="currentColor" />
        </Icon>
        <Icon w={18} h={16} sw={1.100} className="ml-[6px]">
          <path d="M1.500 6v4h2.300L7.500 13.500v-11L3.800 6zM10 6a3 3 0 0 1 0 4M12 4a6 6 0 0 1 0 8M14.300 2.300a8.500 8.500 0 0 1 0 11.400" />
        </Icon>
        <Icon w={18} h={16} sw={1.200} className="ml-[6px]">
          <path d="M7.500 4h6.300c.7 0 1.200.5 1.200 1.200v6.600c0 .7-.5 1.200-1.200 1.200H3.700c-.7 0-1.200-.5-1.200-1.200V8M16.800 7v3" />
          <path d="M7.500 5.800h3.300V11H4.500V8.500C6.500 8.500 7.500 7.500 7.500 5.800z" fill="currentColor" stroke="none" />
          <path d="m4.500.8-3 4h2.200L3 7.800l3.200-4H4z" fill="currentColor" strokeWidth="0.600" />
        </Icon>
        <div className="ml-auto text-right text-[11.500px] leading-[16px]">
          18:30
          <br />
          22/04/2025
        </div>
      </div>
    </footer>
  );
}

export default function App() {
  return (
    <div className="flex h-[723px] w-[1321px] flex-col overflow-hidden bg-[#1e1e1e] font-['Inter',sans-serif]">
      <div className="flex h-[675px] shrink-0">
        <LeftPanel />
        <Canvas />
        <RightPanel />
      </div>
      <Taskbar />
    </div>
  );
}
